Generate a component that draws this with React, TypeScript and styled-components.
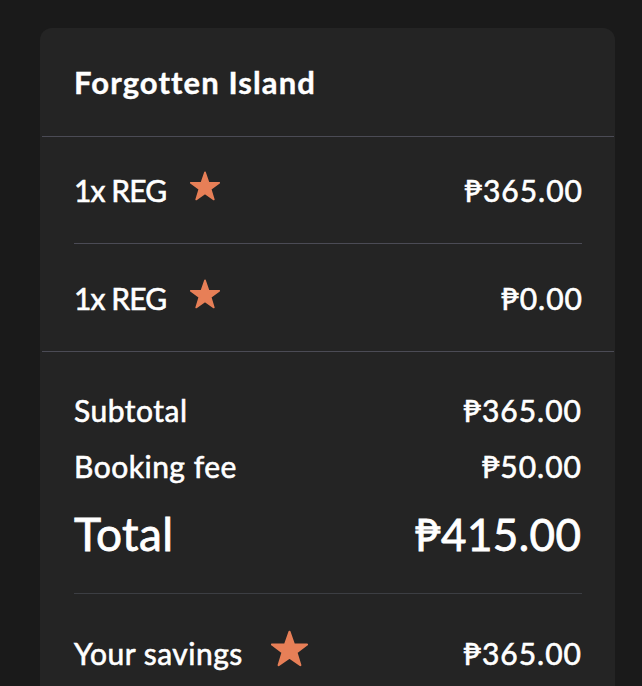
import React from "react";
import styled, { createGlobalStyle } from "styled-components";

const GlobalStyle = createGlobalStyle`
  * {
    box-sizing: border-box;
  }

  body {
    margin: 0;
    background: #1a1a1a;
    font-family: "Lato", "DejaVu Sans", sans-serif;
    color: #ffffff;
  }
`;

interface LineItem {
  label: string;
  amount: string;
}

const items: LineItem[] = [
  { label: "1x REG", amount: "₱365.00" },
  { label: "1x REG", amount: "₱0.00" },
];

const StarIcon = ({ size }: { size: number }) => (
  <StarSvg width={size} height={size} viewBox="1 1.2 22 21.2" aria-hidden>
    <polygon
      points="12,1.8 14.59,9.24 22.46,9.4 16.18,14.16 18.47,21.7 12,17.2 5.53,21.7 7.82,14.16 1.54,9.4 9.41,9.24"
      fill="#e77f57"
      stroke="#e77f57"
      strokeWidth="1.2"
      strokeLinejoin="round"
    />
  </StarSvg>
);

const App = () => {
  return (
    <>
      <GlobalStyle />
      <Page>
        <Card>
          <Header>
            <Title>Forgotten Island</Title>
          </Header>
          <FullDivider />
          <ItemList>
            {items.map((item, i) => (
              <ItemRow key={i}>
                <LabelGroup $gap={24}>
                  <ItemLabel>{item.label}</ItemLabel>
                  <StarIcon size={30} />
                </LabelGroup>
                <Amount>{item.amount}</Amount>
              </ItemRow>
            ))}
          </ItemList>
          <FullDivider />
          <Summary>
            <SummaryRow>
              <Label>Subtotal</Label>
              <Amount>₱365.00</Amount>
            </SummaryRow>
            <SummaryRow>
              <Label>Booking fee</Label>
              <Amount>₱50.00</Amount>
            </SummaryRow>
            <TotalRow>
              <TotalLabel>Total</TotalLabel>
              <TotalAmount>₱415.00</TotalAmount>
            </TotalRow>
          </Summary>
          <InnerDivider $dim />
          <SavingsRow>
            <LabelGroup $gap={28}>
              <Label>Your savings</Label>
              <StarIcon size={37} />
            </LabelGroup>
            <Amount>₱365.00</Amount>
          </SavingsRow>
        </Card>
      </Page>
    </>
  );
};

const Page = styled.div`
  min-height: 686px;
  padding: 28px 27px 0 40px;
  background: #1a1a1a;
`;

const Card = styled.div`
  background: #242424;
  border-radius: 12px 12px 0 0;
  min-height: 700px;
`;

const Header = styled.div`
  display: flex;
  align-items: center;
  height: 108px;
  padding: 0 34px;
`;

const Title = styled.h1`
  margin: 0;
  font-size: 31px;
  font-weight: 700;
  letter-spacing: 1.1px;
  -webkit-text-stroke: 0.4px #ffffff;
`;

const FullDivider = styled.div`
  height: 1px;
  margin: 0 1px 0 2px;
  background: #4b4b55;
`;

const InnerDivider = styled.div<{ $dim?: boolean }>`
  height: 1px;
  margin: 0 33px 0 34px;
  background: ${({ $dim }) => ($dim ? "#3c3e43" : "#4b4b55")};
`;

const ItemList = styled.div`
  padding: 0 33px 0 34px;
`;

const ItemRow = styled.div`
  display: flex;
  align-items: center;
  justify-content: space-between;
  height: 106px;

  & + & {
    height: 108px;
    border-top: 1px solid #4b4b55;
  }
`;

const LabelGroup = styled.div<{ $gap: number }>`
  display: flex;
  align-items: center;
  gap: ${({ $gap }) => $gap}px;
`;

const StarSvg = styled.svg`
  display: block;
  margin-bottom: 8px;
`;

const Label = styled.span`
  font-size: 30px;
  line-height: 1.2;
  letter-spacing: 0.5px;
  -webkit-text-stroke: 0.6px #ffffff;
`;

const ItemLabel = styled(Label)`
  letter-spacing: -0.9px;
`;

const Amount = styled.span`
  font-size: 30px;
  line-height: 1.2;
  letter-spacing: 1px;
  margin-right: -1px;
  -webkit-text-stroke: 0.6px #ffffff;
`;

const Summary = styled.div`
  padding: 30px 34px 27px 34px;
`;

const SummaryRow = styled.div`
  display: flex;
  align-items: center;
  justify-content: space-between;
  height: 56px;
`;

const TotalRow = styled.div`
  display: flex;
  align-items: center;
  justify-content: space-between;
  height: 64px;
  margin-top: 8px;
`;

const TotalLabel = styled.span`
  font-size: 46px;
  line-height: 1.2;
  letter-spacing: 0.4px;
  -webkit-text-stroke: 0.8px #ffffff;
`;

const TotalAmount = styled.span`
  font-size: 44px;
  line-height: 1.2;
  letter-spacing: 0.4px;
  margin-right: -0.4px;
  -webkit-text-stroke: 0.8px #ffffff;
`;

const SavingsRow = styled.div`
  display: flex;
  align-items: center;
  justify-content: space-between;
  height: 117px;
  padding: 0 34px;
`;

export default App;
